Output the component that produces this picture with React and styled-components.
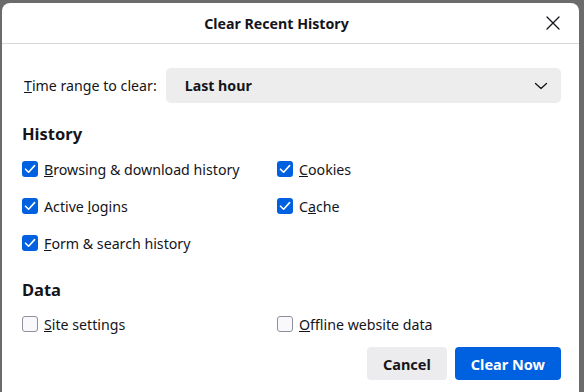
import React from 'react';
import styled, { createGlobalStyle } from 'styled-components';

const GlobalStyle = createGlobalStyle`
  html, body {
    margin: 0;
    height: 100%;
    background: #6b6b6b;
    overflow: hidden;
  }
  #root {
    height: 100%;
  }
`;

const historyItems = [
  { label: 'Browsing & download history', key: 0, checked: true },
  { label: 'Cookies', key: 0, checked: true },
  { label: 'Active logins', key: 7, checked: true },
  { label: 'Cache', key: 1, checked: true },
  { label: 'Form & search history', key: 0, checked: true },
];

const dataItems = [
  { label: 'Site settings', key: 0, checked: false },
  { label: 'Offline website data', key: 0, checked: false },
];

function Check({ checked }) {
  return (
    <Box $checked={checked}>
      {checked && (
        <svg width="12" height="12" viewBox="0 0 12 12">
          <path d="M1.5 6.2 L4.6 9.2 L10.6 2.6" fill="none" stroke="#fff" strokeWidth="1.6" strokeLinecap="round" strokeLinejoin="round" />
        </svg>
      )}
    </Box>
  );
}

function AccessLabel({ text, index }) {
  return (
    <span>
      {text.slice(0, index)}
      <u>{text[index]}</u>
      {text.slice(index + 1)}
    </span>
  );
}

function Option({ item }) {
  return (
    <OptionRow>
      <Check checked={item.checked} />
      <AccessLabel text={item.label} index={item.key} />
    </OptionRow>
  );
}

export default function App() {
  return (
    <>
      <GlobalStyle />
      <Backdrop>
        <Dialog>
          <Header>
            <Title>Clear Recent History</Title>
            <CloseButton>
              <svg width="14" height="14" viewBox="0 0 14 14">
                <path d="M1 1 L13 13 M13 1 L1 13" stroke="#15141a" strokeWidth="1.3" strokeLinecap="round" />
              </svg>
            </CloseButton>
          </Header>
          <Body>
            <RangeRow>
              <AccessLabel text="Time range to clear:" index={0} />
              <Select>
                <span>Last hour</span>
                <svg width="14" height="8" viewBox="0 0 14 8">
                  <path d="M1.5 1.5 L7 6.5 L12.5 1.5" fill="none" stroke="#15141a" strokeWidth="1.3" strokeLinecap="round" strokeLinejoin="round" />
                </svg>
              </Select>
            </RangeRow>

            <Heading $top={20} $bottom={13}>History</Heading>
            <Options>
              {historyItems.map((item) => (
                <Option key={item.label} item={item} />
              ))}
            </Options>

            <Heading $top={25} $bottom={12}>Data</Heading>
            <Options>
              {dataItems.map((item) => (
                <Option key={item.label} item={item} />
              ))}
            </Options>

            <Footer>
              <Button>Cancel</Button>
              <Button $primary>Clear Now</Button>
            </Footer>
          </Body>
        </Dialog>
      </Backdrop>
    </>
  );
}

const Backdrop = styled.div`
  height: 100%;
  padding: 3px 5px 0 2px;
  box-sizing: border-box;
  font-family: 'Noto Sans', 'Open Sans', sans-serif;
  color: #15141a;
`;

const Dialog = styled.div`
  background: #fff;
  border-radius: 8px 8px 0 0;
  height: 100%;
  display: flex;
  flex-direction: column;
`;

const Header = styled.div`
  height: 40px;
  border-bottom: 1px solid #d8d8da;
  display: flex;
  align-items: center;
  justify-content: center;
  padding-right: 28px;
  position: relative;
`;

const Title = styled.h1`
  margin: 0;
  font-size: 14.2px;
  font-weight: 700;
`;

const CloseButton = styled.div`
  position: absolute;
  right: 19px;
  top: 13px;
  width: 14px;
  height: 14px;
  display: flex;
`;

const Body = styled.div`
  padding: 24px 18px 0 20px;
  font-size: 14.2px;
`;

const RangeRow = styled.div`
  display: flex;
  align-items: center;
  gap: 9px;
  padding-left: 2px;
`;

const Select = styled.div`
  flex: 1;
  height: 35px;
  background: #ededee;
  border-radius: 5px;
  display: flex;
  align-items: center;
  justify-content: space-between;
  padding: 0 13px 0 19px;
  font-weight: 700;
`;

const Heading = styled.h2`
  margin: ${(p) => p.$top}px 0 ${(p) => p.$bottom}px;
  font-size: 16.5px;
  font-weight: 700;
  line-height: 22px;
`;

const Options = styled.div`
  display: grid;
  grid-template-columns: 255px 1fr;
  row-gap: 15px;
`;

const OptionRow = styled.label`
  display: flex;
  align-items: center;
  gap: 6px;
  height: 22px;
`;

const Box = styled.span`
  width: 16px;
  height: 16px;
  box-sizing: border-box;
  border-radius: 3px;
  display: flex;
  align-items: center;
  justify-content: center;
  background: ${(p) => (p.$checked ? '#0061e0' : '#f9f9fb')};
  border: ${(p) => (p.$checked ? 'none' : '1px solid #8f8f9d')};
`;

const Footer = styled.div`
  display: flex;
  justify-content: flex-end;
  gap: 8px;
  margin-top: 12px;
`;

const Button = styled.button`
  height: 33px;
  border: none;
  border-radius: 4px;
  padding: 0 16px;
  font-family: inherit;
  font-size: 14.5px;
  font-weight: 700;
  background: ${(p) => (p.$primary ? '#0061e0' : '#ececee')};
  color: ${(p) => (p.$primary ? '#fff' : '#15141a')};
`;
